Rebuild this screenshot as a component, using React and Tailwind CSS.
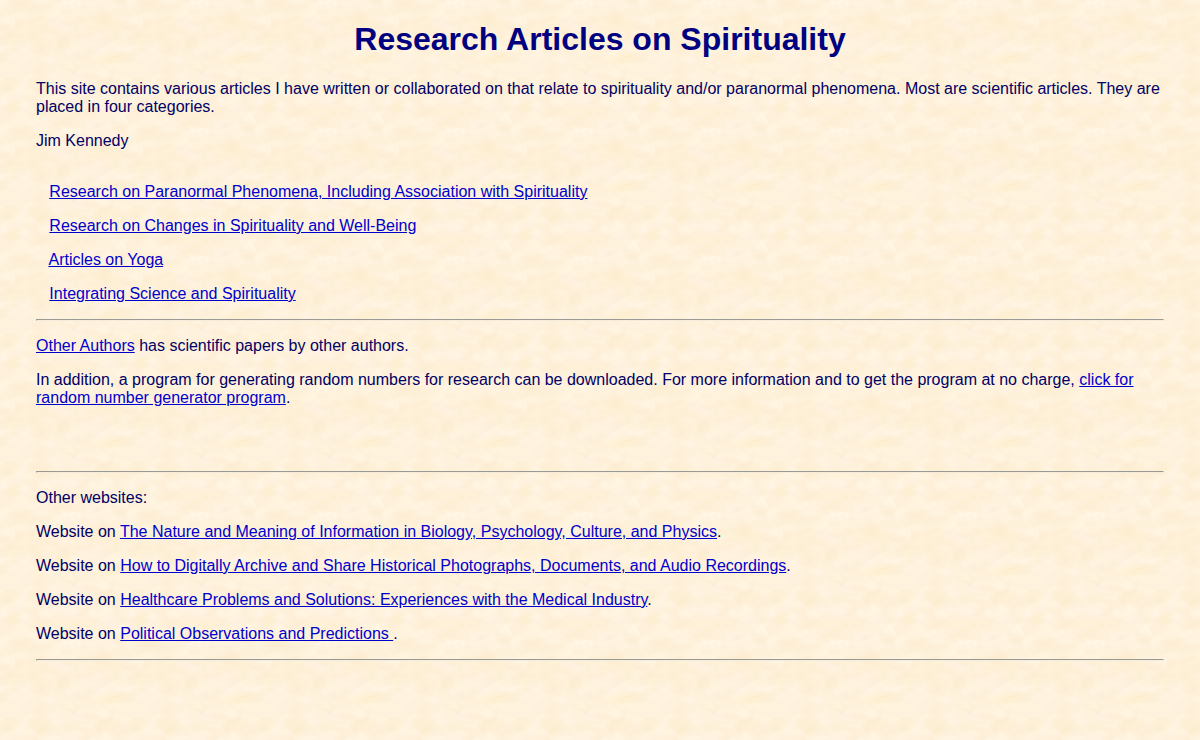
// cx, cy, rx, ry, fill, opacity within one 128px tile
const blotches = [
  [34, 30, 20, 14, "#fdecc9", 0.5],
  [20, 8, 16, 8, "#feedcd", 0.6],
  [104, 24, 18, 9, "#fbebc8", 0.6],
  [62, 40, 7, 7, "#fae8c4", 0.7],
  [9, 38, 8, 8, "#fcecc6", 0.6],
  [77, 24, 7, 6, "#fbeac8", 0.6],
  [103, 60, 11, 4, "#fdf0c6", 0.6],
  [117, 56, 8, 6, "#fdeec8", 0.6],
  [74, 68, 4, 3, "#f6e6c6", 0.7],
  [40, 84, 14, 7, "#fcebcb", 0.6],
  [10, 84, 8, 7, "#fcedc9", 0.6],
  [108, 86, 14, 8, "#fbebc9", 0.6],
  [14, 108, 7, 6, "#fcecc6", 0.6],
  [72, 114, 12, 6, "#fbebc8", 0.5],
  [58, 108, 5, 8, "#fcecce", 0.6],
  [9, 22, 9, 3, "#fff6ea", 1],
  [70, 3, 8, 3, "#fffaea", 1],
  [56, 26, 8, 5, "#fff2e2", 0.8],
  [90, 46, 16, 6, "#fff1e0", 0.8],
  [44, 14, 8, 4, "#fff3e0", 0.6],
  [26, 68, 12, 6, "#fff2e0", 0.7],
  [80, 76, 10, 4, "#fff0e4", 0.8],
  [68, 98, 10, 6, "#fff2e6", 0.8],
  [20, 96, 8, 5, "#fff1e2", 0.7],
  [110, 108, 8, 5, "#fff1e4", 0.7],
  [122, 117, 5, 6, "#fff8e8", 0.9],
  [96, 122, 10, 3, "#fff4e6", 0.8],
  [42, 122, 8, 3, "#fff2e4", 0.7],
];

function Paper() {
  return (
    <svg aria-hidden="true" className="absolute inset-0 -z-10 h-full w-full">
      <defs>
        <filter id="grain" x="0" y="0" width="128" height="128" filterUnits="userSpaceOnUse" colorInterpolationFilters="sRGB">
          <feTurbulence type="fractalNoise" baseFrequency="0.0625 0.094" numOctaves="4" seed="11" stitchTiles="stitch" />
          <feColorMatrix values="0.02 0 0 0 0.988  0.05 0 0 0 0.922  0.09 0.03 0 0 0.802  0 0 0 0 1" />
        </filter>
        <filter id="soft" x="0" y="0" width="128" height="128" filterUnits="userSpaceOnUse" colorInterpolationFilters="sRGB">
          <feGaussianBlur in="SourceGraphic" stdDeviation="2 1" result="blurred" />
          <feTurbulence type="fractalNoise" baseFrequency="0.14" numOctaves="3" seed="5" stitchTiles="stitch" result="warp" />
          <feDisplacementMap in="blurred" in2="warp" scale="14" xChannelSelector="R" yChannelSelector="G" />
        </filter>
        <pattern id="paper" width="128" height="128" patternUnits="userSpaceOnUse">
          <rect width="128" height="128" filter="url(#grain)" />
          <g filter="url(#soft)" opacity="0.6">
            {blotches.map(([cx, cy, rx, ry, fill, opacity]) => (
              <ellipse key={`${cx}-${cy}`} cx={cx} cy={cy} rx={rx} ry={ry} fill={fill} opacity={opacity} />
            ))}
          </g>
        </pattern>
      </defs>
      <rect width="100%" height="100%" fill="url(#paper)" />
    </svg>
  );
}

function A({ children }) {
  return <a href="#" className="text-[#0000cc] underline">{children}</a>;
}

function Rule() {
  return <hr className="border border-t-[#9a9a94] border-r-[#f5ecdc] border-b-[#f5ecdc] border-l-[#9a9a94]" />;
}

const topics = [
  "Research on Paranormal Phenomena, Including Association with Spirituality",
  "Research on Changes in Spirituality and Well-Being",
  "Articles on Yoga",
  "Integrating Science and Spirituality",
];

const sites = [
  "The Nature and Meaning of Information in Biology, Psychology, Culture, and Physics",
  "How to Digitally Archive and Share Historical Photographs, Documents, and Audio Recordings",
  "Healthcare Problems and Solutions: Experiences with the Medical Industry",
  "Political Observations and Predictions ",
];

export default function App() {
  return (
    <div className="relative isolate min-h-screen bg-[#fef0d9] font-['Liberation_Sans',Arial,sans-serif] text-base leading-[18px] text-[#000066]">
      <Paper />
      <main className="flex flex-col gap-4 px-[3%] py-5">
        <h1 className="pb-[6px] text-center text-[32px] leading-[38px] font-bold text-[#000080]">Research Articles on Spirituality</h1>
        <p>
          This site contains various articles I have written or collaborated on that relate to spirituality and/or
          paranormal phenomena. Most are scientific articles. They are placed in four categories.
        </p>
        <p className="pb-[17px]">Jim Kennedy</p>
        {topics.map((t) => (
          <p key={t}>{"\u00a0\u00a0 "}<A>{t}</A></p>
        ))}
        <Rule />
        <p><A>Other Authors</A> has scientific papers by other authors.</p>
        <p className="pb-12">
          In addition, a program for generating random numbers for research can be downloaded. For more information and
          to get the program at no charge, <A>click for random number generator program</A>.
        </p>
        <Rule />
        <p>Other websites:</p>
        {sites.map((t) => (
          <p key={t}>Website on <A>{t}</A>.</p>
        ))}
        <Rule />
      </main>
    </div>
  );
}
